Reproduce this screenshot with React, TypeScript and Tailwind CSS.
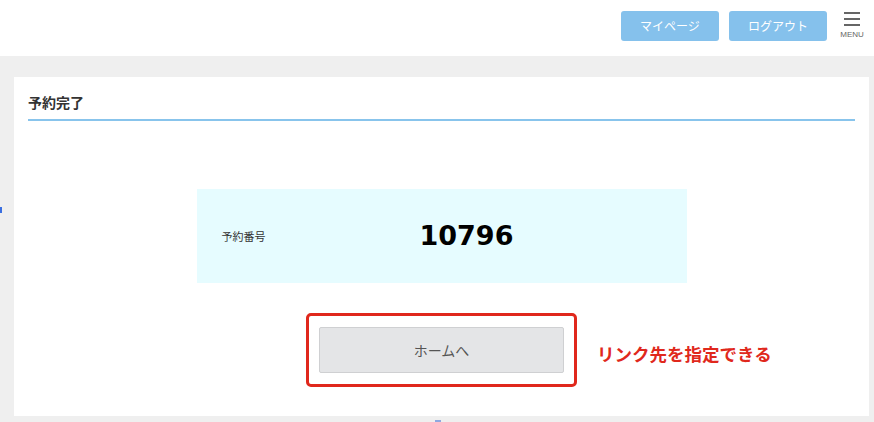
import React from 'react';

const jp = '"Noto Sans CJK JP", "Noto Sans", sans-serif';

export default function App() {
  return (
    <div className="relative min-h-[422px] bg-[#efefef] overflow-hidden" style={{ fontFamily: jp }}>
      {/* header */}
      <header className="h-[56px] bg-white flex items-start justify-end pt-[11px] pr-[8px]">
        <button className="w-[98px] h-[30px] bg-[#85c1ec] text-white text-[12px] rounded-[3px]">マイページ</button>
        <button className="ml-[10px] w-[98px] h-[30px] bg-[#85c1ec] text-white text-[12px] rounded-[3px]">ログアウト</button>
        <div className="ml-[11px] w-[28px] flex flex-col items-center pt-[1px]">
          <div className="flex flex-col gap-[4px] w-[16px]">
            <span className="block h-[2px] bg-[#666]" />
            <span className="block h-[2px] bg-[#666]" />
            <span className="block h-[2px] bg-[#666]" />
          </div>
          <span className="mt-[4px] text-[8px] leading-[10px] text-[#666]" style={{ fontFamily: '"Liberation Sans", sans-serif' }}>MENU</span>
        </div>
      </header>

      {/* content */}
      <main className="pt-[21px] pl-[14px] pr-[5px]">
        <section className="bg-white h-[339px] px-[14px]">
          <h1 className="pt-[15px] pb-[7px] border-b-2 border-[#88c4ec] text-[14px] leading-[20px] font-bold text-[#333]">予約完了</h1>

          <div className="mt-[68px] mx-auto w-[490px] h-[94px] bg-[#e6fcff] flex items-center">
            <span className="w-[223px] pl-[25px] text-[11px] text-[#333]">予約番号</span>
            <span className="text-[27px] font-bold text-black" style={{ fontFamily: '"DejaVu Sans", sans-serif' }}>10796</span>
          </div>

          <div className="mt-[30px] flex justify-center">
            <div className="relative border-[3px] border-[#e0281c] rounded-[5px] px-[10px] py-[11px]">
              <button className="w-[245px] h-[46px] bg-[#e4e5e7] border border-[#cfd0d2] rounded-[2px] text-[14px] text-[#555]">ホームへ</button>
              <span className="absolute left-[288px] top-[26px] whitespace-nowrap text-[17.5px] leading-[24px] font-bold text-[#e0281c]">リンク先を指定できる</span>
            </div>
          </div>
        </section>
      </main>

      <span className="absolute left-0 top-[207px] w-[2px] h-[6px] bg-[#3b6fe0]" />
      <span className="absolute left-[435px] top-[420px] w-[6px] h-[2px] bg-[#8fa8e0]" />
    </div>
  );
}
